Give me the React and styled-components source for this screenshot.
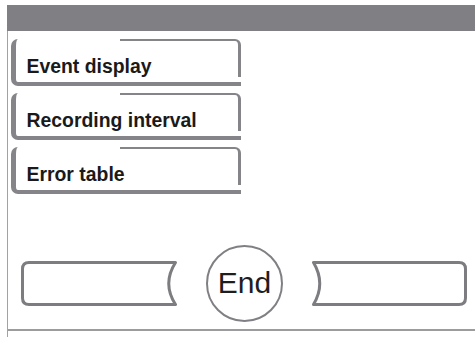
import React from "react";
import styled, { createGlobalStyle } from "styled-components";

const GlobalStyle = createGlobalStyle`
  html, body {
    margin: 0;
    padding: 0;
    background: #ffffff;
  }
  body {
    font-family: "Liberation Sans", Arial, sans-serif;
  }
`;

const Screen = styled.div`
  width: 475px;
  height: 337px;
  padding-top: 5px;
  box-sizing: border-box;
  display: flex;
  flex-direction: column;
  overflow: hidden;
`;

const TitleBar = styled.div`
  height: 26px;
  margin-left: 7px;
  background: #808084;
  flex-shrink: 0;
`;

const Frame = styled.div`
  flex: 1;
  margin-left: 7px;
  border-left: 1.5px solid #a2a2a4;
  display: flex;
  flex-direction: column;
`;

const Menu = styled.div`
  display: flex;
  flex-direction: column;
  gap: 7px;
  padding: 8px 0 0 2.5px;
`;

// left and bottom edges are heavy, the top/right bracket only covers the right half
const MenuButton = styled.div`
  position: relative;
  box-sizing: border-box;
  width: 230px;
  height: 47px;
  border-left: 5px solid #858589;
  border-bottom: 4px solid #858589;
  border-radius: 7px 0 0 7px;
  display: flex;
  align-items: flex-end;
  padding: 0 0 5px 11px;
  font-size: 19.4px;
  line-height: 22px;
  font-weight: bold;
  color: #1a1a1a;
  white-space: nowrap;

  &::before {
    content: "";
    position: absolute;
    top: 0;
    right: 0;
    width: 121px;
    height: 38px;
    box-sizing: border-box;
    border-top: 2px solid #858589;
    border-right: 3px solid #858589;
    border-top-right-radius: 6px;
  }
`;

const SoftRow = styled.div`
  display: flex;
  align-items: center;
  gap: 29px;
  padding-left: 13px;
  margin-top: 50px;
  height: 78px;
`;

const SoftKey = styled.div`
  width: ${(p) => p.$w}px;
  height: 45px;
  flex-shrink: 0;

  svg {
    display: block;
  }
`;

const EndKey = styled.div`
  box-sizing: border-box;
  width: 77px;
  height: 77px;
  border-radius: 50%;
  border: 2.5px solid #808084;
  display: flex;
  align-items: center;
  justify-content: center;
  font-size: 30px;
  color: #1e1e1e;
  flex-shrink: 0;
`;

const BaseLine = styled.div`
  margin-top: 7px;
  height: 1.5px;
  background: #9c9c9e;
`;

function LeftKey() {
  return (
    <SoftKey $w={156}>
      <svg width="156" height="45" viewBox="0 0 156 45">
        <path
          d="M 8 1.5 H 154.5 Q 141 22.5 154.5 43.5 H 8 Q 1.5 43.5 1.5 37 V 8 Q 1.5 1.5 8 1.5 Z"
          fill="none"
          stroke="#7d7d81"
          strokeWidth="3"
          strokeLinejoin="round"
        />
      </svg>
    </SoftKey>
  );
}

function RightKey() {
  return (
    <SoftKey $w={155}>
      <svg width="155" height="45" viewBox="0 0 155 45">
        <path
          d="M 1.5 1.5 H 147 Q 153.5 1.5 153.5 8 V 37 Q 153.5 43.5 147 43.5 H 1.5 Q 14 22.5 1.5 1.5 Z"
          fill="none"
          stroke="#7d7d81"
          strokeWidth="3"
          strokeLinejoin="round"
        />
      </svg>
    </SoftKey>
  );
}

const items = ["Event display", "Recording interval", "Error table"];

export default function App() {
  return (
    <>
      <GlobalStyle />
      <Screen>
        <TitleBar />
        <Frame>
          <Menu>
            {items.map((label) => (
              <MenuButton key={label}>{label}</MenuButton>
            ))}
          </Menu>
          <SoftRow>
            <LeftKey />
            <EndKey>End</EndKey>
            <RightKey />
          </SoftRow>
          <BaseLine />
        </Frame>
      </Screen>
    </>
  );
}
